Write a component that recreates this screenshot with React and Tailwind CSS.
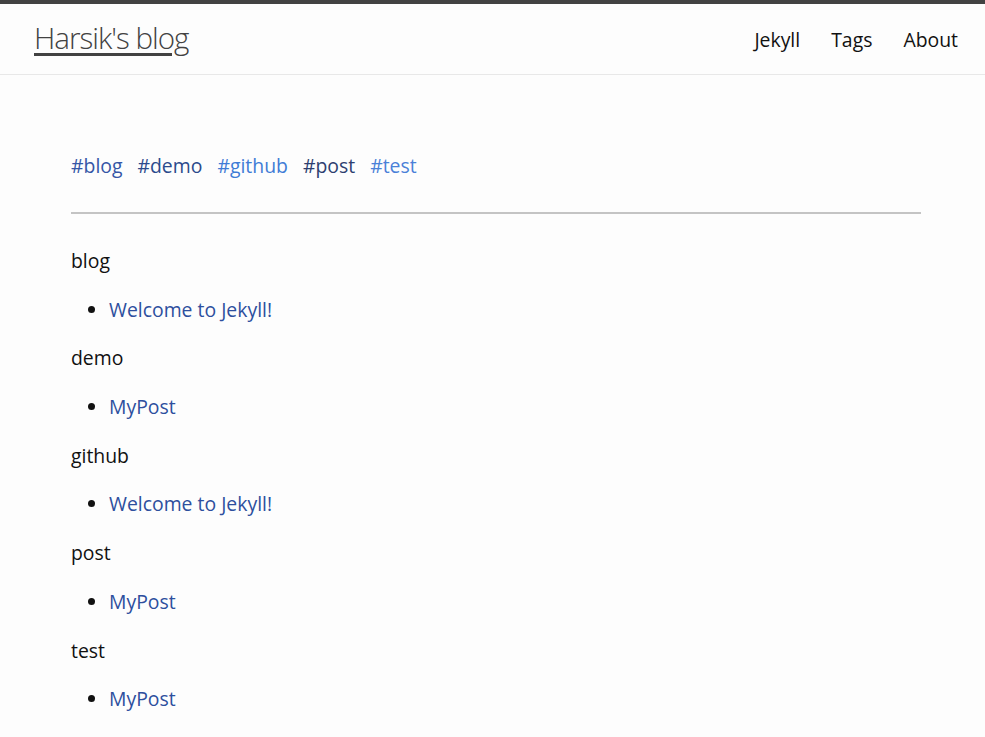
export default function App() {
  const groups = [
    { name: "blog", posts: ["Welcome to Jekyll!"] },
    { name: "demo", posts: ["MyPost"] },
    { name: "github", posts: ["Welcome to Jekyll!"] },
    { name: "post", posts: ["MyPost"] },
    { name: "test", posts: ["MyPost"] },
  ];
  const tags = [
    { t: "#blog", c: "text-[#3556a6]" },
    { t: "#demo", c: "text-[#2b4a8c]" },
    { t: "#github", c: "text-[#3f7cd6]" },
    { t: "#post", c: "text-[#2e3f70]" },
    { t: "#test", c: "text-[#4a80d8]" },
  ];
  return (
    <div className="min-h-[737px] bg-[#fdfdfd] text-[#111] font-['Open_Sans',sans-serif] text-[19.4px]">
      <header className="border-t-4 border-[#424242] border-b border-b-[#e8e8e8] h-[75px] flex items-center justify-between pl-[34px] pr-[27px]">
        <a className="text-[29.6px] font-light tracking-[-1px] text-[#424242] underline decoration-[3px] underline-offset-[4px] leading-[54px] -mt-[2px]">
          Harsik's blog
        </a>
        <nav className="flex gap-[31px] text-[#111] leading-[54px] mt-[2px]">
          <a>Jekyll</a>
          <a>Tags</a>
          <a>About</a>
        </nav>
      </header>
      <main className="px-[71px] pt-[76px] w-[992px]">
        <div className="flex gap-[15px] leading-[30px]">
          {tags.map((x) => (
            <a key={x.t} className={x.c}>{x.t}</a>
          ))}
        </div>
        <hr className="mt-[31px] border-0 border-t-2 border-[#c4c4c4] w-[850px]" />
        <div className="mt-[32px] leading-[30px]">
          {groups.map((g) => (
            <div key={g.name}>
              <div className="mb-[18.7px]">{g.name}</div>
              <ul className="list-disc pl-[38px] mb-[18.7px]">
                {g.posts.map((p) => (
                  <li key={p}><a className="text-[#2d4f9e]">{p}</a></li>
                ))}
              </ul>
            </div>
          ))}
        </div>
      </main>
    </div>
  );
}
